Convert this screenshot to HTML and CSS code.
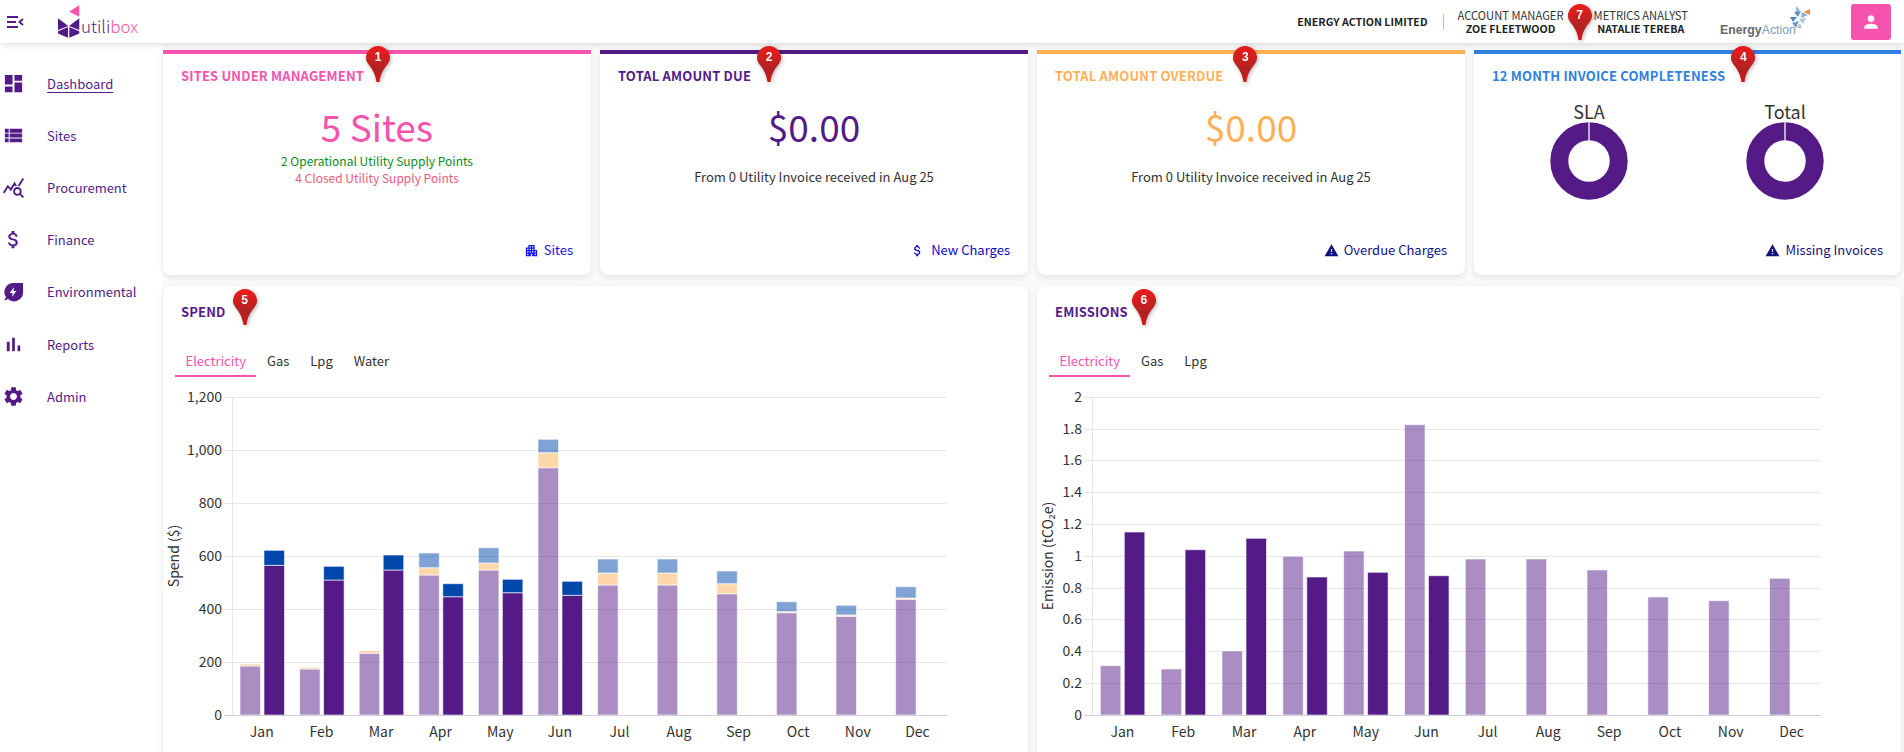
FILE: index.html
```html
<!DOCTYPE html>
<html lang="en">
<head>
  <meta charset="UTF-8" />
  <meta name="viewport" content="width=device-width, initial-scale=1.0"/>
  <title>Utilibox Dashboard</title>
  <link rel="stylesheet" href="styles.css">
</head>
<body>

  <!-- Shared pin shape and gradient -->
  <svg class="defs" aria-hidden="true">
    <defs>
      <linearGradient id="pinFill" x1="0" y1="0" x2="0" y2="1">
        <stop offset="0" stop-color="#ee1c1c"/>
        <stop offset="0.65" stop-color="#b02222"/>
        <stop offset="1" stop-color="#d81414"/>
      </linearGradient>
      <symbol id="pinShape" viewBox="0 0 24 36">
        <path fill="url(#pinFill)" d="M12 0a12 12 0 0 1 12 12c0 7-8.5 9-10.5 24h-3C8.500 21 0 19 0 12A12 12 0 0 1 12 0z"/>
      </symbol>
    </defs>
  </svg>

  <!-- Top bar -->
  <header class="topbar">
    <svg class="menu-icon" viewBox="0 0 17 12" width="17" height="12">
      <path d="M0 1h11M0 6h9M0 11h11M16 3l-3.500 3 3.500 3" fill="none" stroke="#541b87" stroke-width="1.900"/>
    </svg>
    <div class="brand">
      <svg class="brand-mark" viewBox="0 0 22 33" width="22" height="33">
        <polygon fill="#f553ae" points="21.300,0 11.300,6.700 21.300,11.700"/>
        <polygon fill="#541b87" points="0,13.300 10.300,21 0,25"/>
        <polygon fill="#541b87" points="21.300,13.300 11,21 21.300,25"/>
        <polygon fill="#541b87" points="0,26.300 10,22 10,32.700 0,28.500"/>
        <polygon fill="#541b87" points="21.300,26.300 11.300,22 11.300,32.700 21.300,28.500"/>
      </svg>
      <span class="brand-name">utili<span class="brand-box">box</span></span>
    </div>

    <div class="account">
      <strong class="company">ENERGY ACTION LIMITED</strong>
      <span class="divider"></span>
      <div class="contact">
        <span>ACCOUNT MANAGER</span>
        <strong>ZOE FLEETWOOD</strong>
      </div>
      <div class="pin pin-header">
        <svg width="24" height="36"><use href="#pinShape"/></svg>
        <span class="pin-num">7</span>
      </div>
      <div class="contact">
        <span>METRICS ANALYST</span>
        <strong>NATALIE TEREBA</strong>
      </div>
      <div class="ea-logo">
        <svg class="ea-star" viewBox="0 0 22 22" width="22" height="22">
          <polygon fill="#9fb9d4" points="8,0 12,4 8,7"/>
          <polygon fill="#f08a3c" points="22,3 22,9 16,6"/>
          <polygon fill="#5f93c4" points="6,6 13,5 10,11"/>
          <polygon fill="#8fb0cf" points="14,6 20,9 13,12"/>
          <polygon fill="#4d86bd" points="2,11 9,11 5,16"/>
          <polygon fill="#a9c3dc" points="11,13 18,12 15,18"/>
          <polygon fill="#6c9cc8" points="4,17 11,15 8,22"/>
          <polygon fill="#bcbcbc" points="12,17 14,22 9,22"/>
        </svg>
        <span class="ea-name">Energy<span class="ea-action">Action</span></span>
      </div>
      <button class="user-btn" aria-label="Profile">
        <svg viewBox="0 0 24 24" width="20" height="20"><path d="M12 12c2.210 0 4-1.790 4-4s-1.790-4-4-4-4 1.790-4 4 1.790 4 4 4zm0 2c-2.670 0-8 1.340-8 4v2h16v-2c0-2.660-5.330-4-8-4z"/></svg>
      </button>
    </div>
  </header>

  <div class="layout">
    <!-- Side navigation -->
    <aside class="sidebar">
      <a class="nav-item"><svg viewBox="0 0 24 24"><path d="M3 13h8V3H3v10zm0 8h8v-6H3v6zm10 0h8V11h-8v10zm0-18v6h8V3h-8z"/></svg><span class="nav-active">Dashboard</span></a>
      <a class="nav-item"><svg viewBox="0 0 24 24"><path d="M3 14h4v-4H3v4zm0 5h4v-4H3v4zM3 9h4V5H3v4zm5 5h13v-4H8v4zm0 5h13v-4H8v4zM8 5v4h13V5H8z"/></svg><span>Sites</span></a>
      <a class="nav-item"><svg viewBox="0 0 24 24"><path d="M19.880 18.470c.44-.7.7-1.510.7-2.390 0-2.490-2.010-4.500-4.500-4.500s-4.500 2.010-4.500 4.500 2.010 4.500 4.490 4.500c.88 0 1.700-.26 2.390-.7L21.580 23 23 21.580l-3.120-3.110zm-3.800.11c-1.380 0-2.500-1.120-2.500-2.500s1.120-2.500 2.500-2.500 2.500 1.120 2.500 2.500-1.120 2.500-2.500 2.500zm-.36-8.500c-.74.02-1.450.18-2.100.45l-.55-.83-3.800 6.180-3.010-3.520-3.630 5.810L1 17l5-8 3 3.500L13 6l2.720 4.080zm2.590.5c-.64-.28-1.330-.45-2.050-.49L21.380 2 23 3.180l-4.690 7.400z"/></svg><span>Procurement</span></a>
      <a class="nav-item"><svg viewBox="0 0 24 24"><path d="M11.800 10.900c-2.270-.59-3-1.200-3-2.150 0-1.090 1.010-1.850 2.700-1.850 1.780 0 2.440.85 2.500 2.100h2.210c-.07-1.720-1.120-3.300-3.210-3.810V3h-3v2.160c-1.940.42-3.500 1.680-3.500 3.610 0 2.310 1.910 3.460 4.700 4.130 2.500.6 3 1.480 3 2.410 0 .69-.49 1.790-2.700 1.790-2.060 0-2.870-.92-2.980-2.100h-2.200c.12 2.190 1.760 3.420 3.680 3.830V21h3v-2.150c1.950-.37 3.500-1.500 3.500-3.550 0-2.840-2.430-3.810-4.700-4.400z"/></svg><span>Finance</span></a>
      <a class="nav-item"><svg viewBox="0 0 24 24"><path fill-rule="evenodd" d="M22 3H12a9.500 9.500 0 0 0-7.600 15.200L2.500 20l1.500 1.500 2-1.900A9.500 9.500 0 0 0 22 12.500zM12.500 7.500l-4.500 6h3l-.5 4 4.500-6h-3z"/></svg><span>Environmental</span></a>
      <a class="nav-item"><svg viewBox="0 0 24 24"><path d="M5 9.200h3V19H5zM10.600 5h2.800v14h-2.800zm5.600 8H19v6h-2.800z"/></svg><span>Reports</span></a>
      <a class="nav-item"><svg viewBox="0 0 24 24"><path d="M19.140 12.940c.04-.3.06-.61.06-.94 0-.32-.02-.64-.07-.94l2.030-1.580c.18-.14.23-.41.12-.61l-1.920-3.320c-.12-.22-.37-.29-.59-.22l-2.390.96c-.5-.38-1.030-.7-1.620-.94l-.36-2.540c-.04-.24-.24-.41-.48-.41h-3.840c-.24 0-.43.17-.47.41l-.36 2.540c-.59.24-1.130.57-1.620.94l-2.390-.96c-.22-.08-.47 0-.59.22L2.740 8.870c-.12.21-.08.47.12.61l2.030 1.580c-.05.3-.09.63-.09.94s.02.64.07.94l-2.030 1.580c-.18.14-.23.41-.12.61l1.920 3.320c.12.22.37.29.59.22l2.390-.96c.5.38 1.030.7 1.620.94l.36 2.540c.05.24.24.41.48.41h3.840c.24 0 .44-.17.47-.41l.36-2.540c.59-.24 1.130-.56 1.620-.94l2.390.96c.22.08.47 0 .59-.22l1.920-3.320c.12-.22.07-.47-.12-.61l-2.010-1.580zM12 15.600c-1.980 0-3.600-1.620-3.600-3.600s1.620-3.600 3.600-3.600 3.600 1.620 3.600 3.600-1.620 3.600-3.600 3.600z"/></svg><span>Admin</span></a>
    </aside>

    <main class="content">
      <!-- Summary cards -->
      <section class="card stat-card pink">
        <h2 class="card-title">SITES UNDER MANAGEMENT
          <span class="pin pin-top pin-near"><svg width="24" height="36"><use href="#pinShape"/></svg><span class="pin-num">1</span></span>
        </h2>
        <div class="big-value">5 Sites</div>
        <p class="note note-small note-green">2 Operational Utility Supply Points</p>
        <p class="note note-small note-red">4 Closed Utility Supply Points</p>
        <a class="card-link link-blue">
          <svg viewBox="0 0 24 24"><path d="M17 11V3H7v4H3v14h8v-4h2v4h8V11h-4zM7 19H5v-2h2v2zm0-4H5v-2h2v2zm0-4H5V9h2v2zm4 4H9v-2h2v2zm0-4H9V9h2v2zm0-4H9V5h2v2zm4 8h-2v-2h2v2zm0-4h-2V9h2v2zm0-4h-2V5h2v2zm4 12h-2v-2h2v2zm0-4h-2v-2h2v2z"/></svg>Sites
        </a>
      </section>

      <section class="card stat-card purple">
        <h2 class="card-title">TOTAL AMOUNT DUE
          <span class="pin pin-top"><svg width="24" height="36"><use href="#pinShape"/></svg><span class="pin-num">2</span></span>
        </h2>
        <div class="big-value">$0.00</div>
        <p class="note note-dark">From 0 Utility Invoice received in Aug 25</p>
        <a class="card-link link-mid">
          <svg viewBox="0 0 24 24"><path d="M11.800 10.900c-2.270-.59-3-1.200-3-2.150 0-1.090 1.010-1.850 2.700-1.850 1.780 0 2.440.85 2.500 2.100h2.210c-.07-1.720-1.120-3.300-3.210-3.810V3h-3v2.160c-1.940.42-3.500 1.680-3.500 3.610 0 2.310 1.910 3.460 4.700 4.130 2.500.6 3 1.480 3 2.410 0 .69-.49 1.790-2.700 1.790-2.060 0-2.870-.92-2.980-2.100h-2.200c.12 2.190 1.760 3.420 3.680 3.830V21h3v-2.150c1.950-.37 3.500-1.500 3.500-3.550 0-2.840-2.430-3.810-4.700-4.400z"/></svg>New Charges
        </a>
      </section>

      <section class="card stat-card orange">
        <h2 class="card-title">TOTAL AMOUNT OVERDUE
          <span class="pin pin-top pin-far"><svg width="24" height="36"><use href="#pinShape"/></svg><span class="pin-num">3</span></span>
        </h2>
        <div class="big-value">$0.00</div>
        <p class="note note-dark">From 0 Utility Invoice received in Aug 25</p>
        <a class="card-link link-navy">
          <svg viewBox="0 0 24 24"><path d="M1 21h22L12 2 1 21zm12-3h-2v-2h2v2zm0-4h-2v-4h2v4z"/></svg>Overdue Charges
        </a>
      </section>

      <section class="card stat-card blue">
        <h2 class="card-title">12 MONTH INVOICE COMPLETENESS
          <span class="pin pin-top"><svg width="24" height="36"><use href="#pinShape"/></svg><span class="pin-num">4</span></span>
        </h2>
        <div class="donuts">
          <div class="donut">
            <div class="donut-title">SLA</div>
            <svg viewBox="0 0 78 78" width="78" height="78">
              <circle cx="39" cy="39" r="29.700" fill="none" stroke="#541b87" stroke-width="18"/>
              <line x1="39" y1="0" x2="39" y2="19" stroke="#e4dcec" stroke-width="1.500"/>
            </svg>
          </div>
          <div class="donut">
            <div class="donut-title">Total</div>
            <svg viewBox="0 0 78 78" width="78" height="78">
              <circle cx="39" cy="39" r="29.700" fill="none" stroke="#541b87" stroke-width="18"/>
              <line x1="39" y1="0" x2="39" y2="19" stroke="#e4dcec" stroke-width="1.500"/>
            </svg>
          </div>
        </div>
        <a class="card-link link-navy">
          <svg viewBox="0 0 24 24"><path d="M1 21h22L12 2 1 21zm12-3h-2v-2h2v2zm0-4h-2v-4h2v4z"/></svg>Missing Invoices
        </a>
      </section>

      <!-- Spend chart -->
      <section class="card chart-card">
        <h2 class="card-title chart-title">SPEND
          <span class="pin pin-low"><svg width="24" height="36"><use href="#pinShape"/></svg><span class="pin-num">5</span></span>
        </h2>
        <div class="tabs">
          <a class="tab active">Electricity</a>
          <a class="tab">Gas</a>
          <a class="tab">Lpg</a>
          <a class="tab">Water</a>
        </div>
        <svg class="chart" width="864" height="372" viewBox="0 0 864 372">
          <g class="grid">
            <path d="M61 17.500H784M61 70.500H784M61 123.500H784M61 176.500H784M61 229.500H784M61 282.500H784M69.500 17V335"/>
          </g>
          <g class="bars">
            <rect class="bar light" x="77" y="286" height="49"/><rect class="bar peach" x="77" y="284" height="2"/>
            <rect class="bar dark" x="101" y="185.300" height="149.700"/><rect class="bar blue" x="101" y="170.300" height="15"/>
            <rect class="bar light" x="136.600" y="289" height="46"/><rect class="bar peach" x="136.600" y="287.300" height="1.700"/>
            <rect class="bar dark" x="160.600" y="200" height="135"/><rect class="bar blue" x="160.600" y="186.300" height="13.700"/>
            <rect class="bar light" x="196.200" y="273.300" height="61.700"/><rect class="bar peach" x="196.200" y="270.700" height="2.600"/>
            <rect class="bar dark" x="220.200" y="190" height="145"/><rect class="bar blue" x="220.200" y="175" height="15"/>
            <rect class="bar light" x="255.800" y="195" height="140"/><rect class="bar peach" x="255.800" y="187.700" height="7.300"/><rect class="bar sky" x="255.800" y="173" height="14.700"/>
            <rect class="bar dark" x="279.800" y="216.700" height="118.300"/><rect class="bar blue" x="279.800" y="203.700" height="13"/>
            <rect class="bar light" x="315.400" y="190" height="145"/><rect class="bar peach" x="315.400" y="183" height="7"/><rect class="bar sky" x="315.400" y="167.700" height="15.300"/>
            <rect class="bar dark" x="339.400" y="212.700" height="122.300"/><rect class="bar blue" x="339.400" y="199.300" height="13.400"/>
            <rect class="bar light" x="375" y="87.700" height="247.300"/><rect class="bar peach" x="375" y="72.700" height="15"/><rect class="bar sky" x="375" y="59.300" height="13.400"/>
            <rect class="bar dark" x="399" y="215.300" height="119.700"/><rect class="bar blue" x="399" y="201.300" height="14"/>
            <rect class="bar light" x="434.600" y="205" height="130"/><rect class="bar peach" x="434.600" y="193" height="12"/><rect class="bar sky" x="434.600" y="179" height="14"/>
            <rect class="bar light" x="494.200" y="205" height="130"/><rect class="bar peach" x="494.200" y="193" height="12"/><rect class="bar sky" x="494.200" y="179" height="14"/>
            <rect class="bar light" x="553.800" y="213.700" height="121.300"/><rect class="bar peach" x="553.800" y="203.700" height="10"/><rect class="bar sky" x="553.800" y="191" height="12.700"/>
            <rect class="bar light" x="613.400" y="232.700" height="102.300"/><rect class="bar peach" x="613.400" y="231.700" height="1"/><rect class="bar sky" x="613.400" y="221.700" height="10"/>
            <rect class="bar light" x="673" y="236.300" height="98.700"/><rect class="bar peach" x="673" y="235" height="1.300"/><rect class="bar sky" x="673" y="225.300" height="9.700"/>
            <rect class="bar light" x="732.600" y="219.300" height="115.700"/><rect class="bar peach" x="732.600" y="218" height="1.300"/><rect class="bar sky" x="732.600" y="206.700" height="11.300"/>
          </g>
          <path class="baseline" d="M61 335.500H784"/>
          <g class="y-labels">
            <text x="59" y="22">1,200</text>
            <text x="59" y="75">1,000</text>
            <text x="59" y="128">800</text>
            <text x="59" y="181">600</text>
            <text x="59" y="234">400</text>
            <text x="59" y="287">200</text>
            <text x="59" y="340">0</text>
          </g>
          <g class="x-labels">
            <text x="98.800" y="357">Jan</text>
            <text x="158.400" y="357">Feb</text>
            <text x="218" y="357">Mar</text>
            <text x="277.600" y="357">Apr</text>
            <text x="337.200" y="357">May</text>
            <text x="396.800" y="357">Jun</text>
            <text x="456.400" y="357">Jul</text>
            <text x="516" y="357">Aug</text>
            <text x="575.600" y="357">Sep</text>
            <text x="635.200" y="357">Oct</text>
            <text x="694.800" y="357">Nov</text>
            <text x="754.400" y="357">Dec</text>
          </g>
          <text class="axis-title" transform="translate(16 176) rotate(-90)">Spend ($)</text>
        </svg>
      </section>

      <!-- Emissions chart -->
      <section class="card chart-card">
        <h2 class="card-title chart-title">EMISSIONS
          <span class="pin pin-low pin-near"><svg width="24" height="36"><use href="#pinShape"/></svg><span class="pin-num">6</span></span>
        </h2>
        <div class="tabs">
          <a class="tab active">Electricity</a>
          <a class="tab">Gas</a>
          <a class="tab">Lpg</a>
        </div>
        <svg class="chart" width="864" height="372" viewBox="0 0 864 372">
          <g class="grid">
            <path d="M47 17.500H784M47 49.500H784M47 80.500H784M47 112.500H784M47 144.500H784M47 176.500H784M47 208.500H784M47 239.500H784M47 271.500H784M47 303.500H784M55.500 17V335"/>
          </g>
          <g class="bars">
            <rect class="bar light" x="63.300" y="285.700" height="49.300"/><rect class="bar dark" x="87.300" y="152" height="183"/>
            <rect class="bar light" x="124.100" y="289" height="46"/><rect class="bar dark" x="148.100" y="169.700" height="165.300"/>
            <rect class="bar light" x="185" y="271" height="64"/><rect class="bar dark" x="209" y="158.300" height="176.700"/>
            <rect class="bar light" x="245.800" y="176.300" height="158.700"/><rect class="bar dark" x="269.800" y="197" height="138"/>
            <rect class="bar light" x="306.600" y="171" height="164"/><rect class="bar dark" x="330.600" y="192.300" height="142.700"/>
            <rect class="bar light" x="367.500" y="44.700" height="290.300"/><rect class="bar dark" x="391.500" y="195.700" height="139.300"/>
            <rect class="bar light" x="428.300" y="179" height="156"/>
            <rect class="bar light" x="489.100" y="179" height="156"/>
            <rect class="bar light" x="550" y="190" height="145"/>
            <rect class="bar light" x="610.800" y="217" height="118"/>
            <rect class="bar light" x="671.600" y="220.700" height="114.300"/>
            <rect class="bar light" x="732.500" y="198.300" height="136.700"/>
          </g>
          <path class="baseline" d="M47 335.500H784"/>
          <g class="y-labels">
            <text x="45" y="22">2</text>
            <text x="45" y="54">1.8</text>
            <text x="45" y="85">1.6</text>
            <text x="45" y="117">1.4</text>
            <text x="45" y="149">1.2</text>
            <text x="45" y="181">1</text>
            <text x="45" y="213">0.8</text>
            <text x="45" y="244">0.6</text>
            <text x="45" y="276">0.4</text>
            <text x="45" y="308">0.2</text>
            <text x="45" y="340">0</text>
          </g>
          <g class="x-labels">
            <text x="85.400" y="357">Jan</text>
            <text x="146.200" y="357">Feb</text>
            <text x="207.100" y="357">Mar</text>
            <text x="267.900" y="357">Apr</text>
            <text x="328.700" y="357">May</text>
            <text x="389.600" y="357">Jun</text>
            <text x="450.400" y="357">Jul</text>
            <text x="511.200" y="357">Aug</text>
            <text x="572.100" y="357">Sep</text>
            <text x="632.900" y="357">Oct</text>
            <text x="693.700" y="357">Nov</text>
            <text x="754.600" y="357">Dec</text>
          </g>
          <text class="axis-title" transform="translate(16 176) rotate(-90)">Emission (tCO₂e)</text>
        </svg>
      </section>
    </main>
  </div>

</body>
</html>
```

FILE: styles.css
```css
html, body {
  margin: 0;
  padding: 0;
  height: 752px;
  overflow: hidden;
}

body {
  background: #fafafa;
  color: #333;
  font-family: "Noto Sans CJK JP", "Noto Sans", sans-serif;
  font-size: 13px;
}

.defs {
  position: absolute;
  width: 0;
  height: 0;
}

/* Top bar */
.topbar {
  display: flex;
  align-items: center;
  height: 43px;
  padding: 0 13px 0 7px;
  background: #fff;
  box-shadow: 0 2px 6px rgba(0,0,0,0.12);
  position: relative;
  z-index: 2;
}

.menu-icon {
  margin-right: 34px;
}

.brand {
  display: flex;
  align-items: flex-end;
  height: 38px;
  margin-top: 5px;
}

.brand-mark {
  margin-right: 1px;
  margin-bottom: 5px;
}

.brand-name {
  color: #541b87;
  font-size: 17px;
  font-weight: 300;
  line-height: 24px;
  margin-bottom: 5px;
}

.brand-box {
  color: #f553ae;
}

.account {
  display: flex;
  align-items: center;
  margin-left: auto;
}

.company {
  font-size: 10.700px;
  font-weight: 700;
  color: #222;
}

.divider {
  width: 1px;
  height: 15px;
  margin: 0 14px 0 15px;
  background: #e6b566;
}

.contact {
  display: flex;
  flex-direction: column;
  align-items: center;
  font-size: 11.200px;
  line-height: 13px;
  color: #333;
}

.contact strong {
  color: #222;
  font-size: 10.700px;
}

.pin-header {
  margin: 0 2px 0 4px;
}

.ea-logo {
  display: flex;
  flex-direction: column;
  align-items: flex-end;
  width: 90px;
  margin-left: 32px;
  margin-right: 41px;
}

.ea-star {
  margin-bottom: -6px;
}

.ea-name {
  align-self: flex-start;
  font-family: "Liberation Sans", sans-serif;
  font-size: 12.300px;
  font-weight: 700;
  line-height: 16px;
  color: #666;
}

.ea-action {
  color: #7d9db8;
  font-weight: 400;
}

.user-btn {
  display: flex;
  align-items: center;
  justify-content: center;
  width: 40px;
  height: 36px;
  padding: 0;
  border: none;
  border-radius: 3px;
  background: #f553ae;
}

.user-btn svg {
  fill: #fff;
}

/* Side nav + content */
.layout {
  display: flex;
  height: 709px;
}

.sidebar {
  flex: 0 0 163px;
  padding-top: 14px;
  background: #fff;
  box-sizing: border-box;
}

.nav-item {
  display: flex;
  align-items: center;
  height: 52.200px;
  padding-left: 2px;
  color: #541b87;
  font-size: 13px;
}

.nav-item svg {
  width: 23px;
  height: 23px;
  margin-right: 22px;
  fill: #541b87;
}

.nav-active {
  text-decoration: underline;
  text-underline-offset: 3px;
}

.content {
  flex: 1;
  display: grid;
  grid-template-columns: repeat(3, 428px) 1fr;
  grid-template-rows: 225px 480px;
  gap: 11px 9px;
  padding: 7px 3px 0 0;
}

/* Cards */
.card {
  display: flex;
  flex-direction: column;
  background: #fff;
  border-radius: 8px;
  box-shadow: 0 2px 6px rgba(0,0,0,0.1);
}

.stat-card {
  border-top: 4px solid;
  border-radius: 0 0 8px 8px;
  padding: 12px 18px 15px;
  text-align: center;
}

.stat-card.pink { border-color: #f553ae; color: #f553ae; }
.stat-card.purple { border-color: #541b87; color: #541b87; }
.stat-card.orange { border-color: #ffb057; color: #ffb057; }
.stat-card.blue { border-color: #2f80e0; color: #2f80e0; }

.card-title {
  position: relative;
  align-self: flex-start;
  margin: 0;
  font-size: 13px;
  font-weight: 700;
  line-height: 20px;
  letter-spacing: 0.15px;
  text-align: left;
}

.big-value {
  margin: 15px 0 2px;
  font-size: 37px;
  line-height: 50px;
}

.note {
  margin: 0;
  font-size: 13px;
  line-height: 16.500px;
}

.note-small { font-size: 12px; }
.note-green { color: #0e8a16; }
.note-red { color: #ee5a7a; }
.note-dark { color: #333; margin-top: 16px; }

.card-link {
  display: flex;
  align-items: center;
  justify-content: flex-end;
  gap: 5px;
  margin-top: auto;
  font-size: 13px;
  line-height: 20px;
}

.card-link svg {
  width: 15px;
  height: 15px;
  fill: currentColor;
}

.link-blue { color: #1414f0; }
.link-mid { color: #0a0abf; gap: 6px; }
.link-navy { color: #12127f; }

.donuts {
  display: grid;
  grid-template-columns: 196px 196px;
  margin: 15px 0 0 -1px;
}

.donut {
  display: flex;
  flex-direction: column;
  align-items: center;
}

.donut-title {
  color: #333;
  font-size: 18px;
  line-height: 21px;
}

/* Pins */
.pin {
  position: relative;
  display: block;
  flex: 0 0 24px;
  width: 24px;
  height: 36px;
  filter: drop-shadow(1px 1px 2px rgba(0,0,0,0.3));
}

.pin svg {
  display: block;
}

.pin-top,
.pin-low {
  position: absolute;
  left: 100%;
  margin-left: 6px;
}

.pin-top {
  top: -20px;
}

.pin-low {
  top: -13px;
  margin-left: 7px;
}

.pin-top.pin-near {
  margin-left: 2px;
}

.pin-low.pin-near {
  margin-left: 4px;
}

.pin-top.pin-far {
  margin-left: 10px;
}

.pin-num {
  position: absolute;
  top: 4px;
  left: 0;
  width: 24px;
  color: #fff;
  font-family: "Liberation Sans", sans-serif;
  font-size: 12px;
  font-weight: 700;
  line-height: 14px;
  letter-spacing: 0;
  text-align: center;
}

/* Chart cards */
.chart-card {
  grid-column: span 2;
}

.chart-title {
  margin: 16px 0 0 18px;
  color: #541b87;
}

.tabs {
  display: flex;
  margin: 25px 0 3px 12px;
}

.tab {
  height: 30px;
  padding: 0 10.500px;
  box-sizing: border-box;
  color: #333;
  font-size: 13px;
  line-height: 28px;
}

.tab.active {
  color: #f553ae;
  border-bottom: 2px solid #f553ae;
}

.chart {
  display: block;
}

.grid path {
  fill: none;
  stroke: #e6e6e6;
}

.baseline {
  fill: none;
  stroke: #ccd0d6;
}

.bar {
  width: 20.500px;
  stroke: #fff;
  stroke-opacity: 0.6;
}

.bar.light { fill: rgba(84,27,135,0.5); }
.bar.dark { fill: #541b87; }
.bar.blue { fill: #0047ab; }
.bar.sky { fill: rgba(0,71,171,0.5); }
.bar.peach { fill: rgba(255,176,87,0.5); }

.chart text {
  fill: #333;
  font-size: 14px;
}

.y-labels text {
  text-anchor: end;
}

.x-labels text,
.axis-title {
  text-anchor: middle;
}
```
